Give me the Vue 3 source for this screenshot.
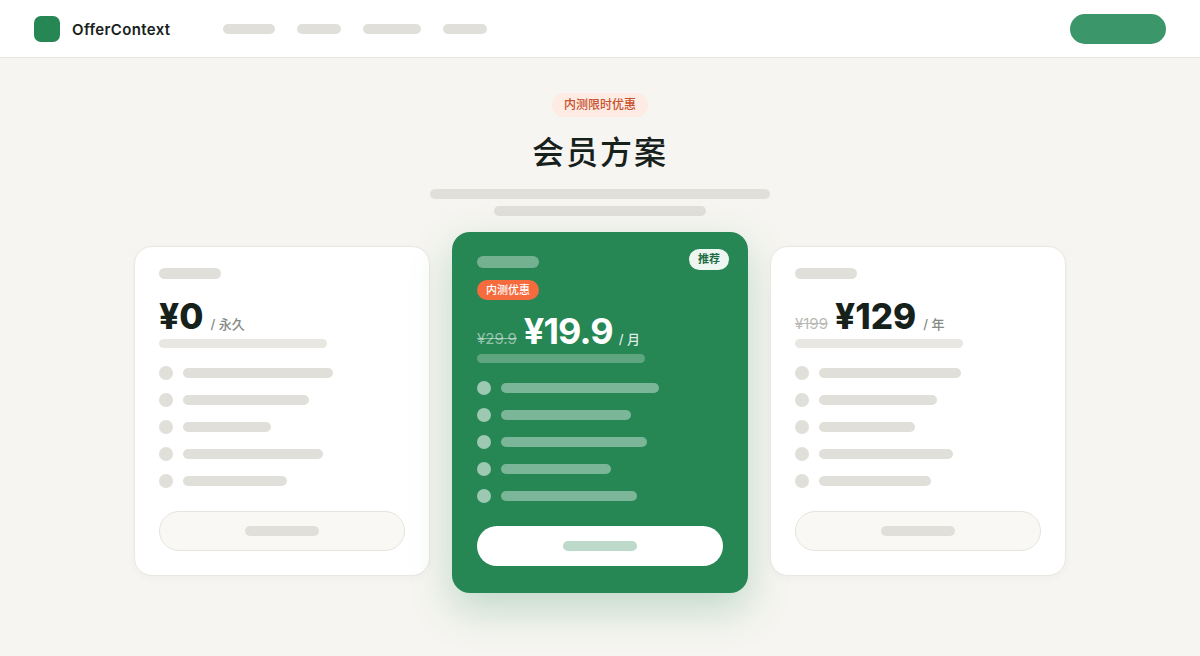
<script setup>
const navs = [52, 44, 58, 44]
const plans = [
  { key: 'free', old: '', price: '¥0', unit: '/ 永久', rows: [150, 126, 88, 140, 104] },
  { key: 'pro', old: '¥29.9', price: '¥19.9', unit: '/ 月', rows: [158, 130, 146, 110, 136] },
  { key: 'year', old: '¥199', price: '¥129', unit: '/ 年', rows: [142, 118, 96, 134, 112] }
]
</script>

<template>
  <div class="page">
    <header class="top">
      <div class="logo"></div>
      <span class="brand">OfferContext</span>
      <nav class="nav">
        <i v-for="(w, n) in navs" :key="n" class="bar nav-bar" :style="{ width: w + 'px' }"></i>
      </nav>
      <div class="cta"></div>
    </header>
    <main class="main">
      <div class="tag">内测限时优惠</div>
      <h1 class="title">会员方案</h1>
      <i class="bar lead lead-a"></i>
      <i class="bar lead lead-b"></i>
      <section class="cards">
        <article v-for="p in plans" :key="p.key" class="card" :class="{ hot: p.key === 'pro' }">
          <span v-if="p.key === 'pro'" class="rec">推荐</span>
          <i class="bar name"></i>
          <span v-if="p.key === 'pro'" class="promo">内测优惠</span>
          <div class="price-row">
            <s v-if="p.old" class="old">{{ p.old }}</s>
            <span class="price">{{ p.price }}</span>
            <span class="unit">{{ p.unit }}</span>
          </div>
          <i class="bar desc"></i>
          <ul class="rows">
            <li v-for="(w, n) in p.rows" :key="n" class="row">
              <i class="dot"></i>
              <i class="bar row-bar" :style="{ width: w + 'px' }"></i>
            </li>
          </ul>
          <div class="btn"><i class="bar btn-bar"></i></div>
        </article>
      </section>
    </main>
  </div>
</template>

<style>
html, body { margin: 0; background: #f6f5f1; }
</style>

<style scoped>
.page {
  height: 656px;
  overflow: hidden;
  background: #f6f5f1;
  font-family: Inter, "Noto Sans CJK SC", sans-serif;
  color: #17211c;
}
i { display: block; }
.bar { border-radius: 6px; background: #e0dfd9; }
.top {
  box-sizing: border-box;
  height: 58px;
  display: flex;
  align-items: center;
  padding: 0 34px;
  background: #fff;
  border-bottom: 1px solid #e6e4de;
}
.logo { width: 26px; height: 26px; border-radius: 7px; background: #268654; }
.brand { width: 99px; margin-left: 12px; padding-top: 1px; font-size: 15px; font-weight: 600; letter-spacing: 0.36px; white-space: nowrap; }
.nav { display: flex; gap: 22px; margin-left: 52px; }
.nav-bar { height: 10px; }
.cta { width: 96px; height: 30px; margin-left: auto; border-radius: 15px; background: #3b9669; }
.main { display: flex; flex-direction: column; align-items: center; padding-top: 35px; }
.tag {
  box-sizing: border-box;
  width: 96px;
  height: 24px;
  border-radius: 12px;
  background: #fdebe4;
  color: #c8502c;
  font-size: 12px;
  font-weight: 500;
  line-height: 24px;
  text-align: center;
}
.title {
  margin: 16px 0 16px;
  font-size: 32px;
  line-height: 40px;
  font-weight: 500;
  letter-spacing: 2px;
}
.lead { height: 10px; }
.lead-a { width: 340px; }
.lead-b { width: 212px; margin-top: 7px; }
.cards { display: flex; align-items: flex-start; gap: 22px; margin-top: 16px; }
.card {
  position: relative;
  box-sizing: border-box;
  width: 296px;
  height: 330px;
  margin-top: 14px;
  padding: 21px 24px 0;
  display: flex;
  flex-direction: column;
  align-items: flex-start;
  background: #fff;
  border: 1px solid #e9e7e1;
  border-radius: 18px;
  box-shadow: 0 2px 8px rgba(23, 33, 28, 0.03);
}
.name { width: 62px; height: 11px; }
.price-row { display: flex; align-items: baseline; height: 40px; margin-top: 17px; white-space: nowrap; }
.old { margin-right: 7px; font-size: 15px; color: #b9bab5; }
.price { font-size: 35px; line-height: 40px; font-weight: 800; }
.unit { margin-left: 7px; font-size: 13px; font-weight: 500; color: #858a86; }
.desc { width: 168px; height: 9px; margin-top: 3px; background: #e8e7e2; }
.rows { list-style: none; margin: 18px 0 0; padding: 0; display: flex; flex-direction: column; gap: 13px; }
.row { display: flex; align-items: center; gap: 10px; height: 14px; }
.dot { width: 14px; height: 14px; border-radius: 50%; background: #e0dfd9; }
.row-bar { height: 10px; }
.btn {
  box-sizing: border-box;
  align-self: stretch;
  height: 40px;
  margin-top: 23px;
  display: flex;
  align-items: center;
  justify-content: center;
  border: 1px solid #e6e4de;
  border-radius: 20px;
  background: #f9f8f4;
}
.btn-bar { width: 74px; height: 10px; }
.hot {
  height: 361px;
  margin-top: 0;
  padding: 24px 25px 0;
  background: #268654;
  border: 0;
  color: #fff;
  box-shadow: 0 16px 40px rgba(38, 134, 84, 0.26);
}
.hot .bar { background: rgba(255, 255, 255, 0.4); }
.hot .name { height: 12px; background: rgba(255, 255, 255, 0.36); }
.hot .desc { margin-top: 3px; background: rgba(255, 255, 255, 0.26); }
.hot .dot { background: rgba(255, 255, 255, 0.55); }
.hot .old { color: rgba(255, 255, 255, 0.5); }
.hot .price { font-size: 36px; font-weight: 700; letter-spacing: -0.9px; }
.hot .unit { margin-left: 6px; color: rgba(255, 255, 255, 0.85); }
.hot .price-row { margin-top: 11px; }
.hot .rows { margin-top: 18px; }
.rec {
  position: absolute;
  top: 17px;
  right: 19px;
  width: 40px;
  height: 21px;
  border-radius: 11px;
  background: #eef6f1;
  color: #1f6b44;
  font-size: 11px;
  font-weight: 600;
  line-height: 21px;
  text-align: center;
}
.promo {
  width: 62px;
  height: 20px;
  margin-top: 12px;
  border-radius: 10px;
  background: #f56b3d;
  color: #fff;
  font-size: 11px;
  font-weight: 500;
  line-height: 20px;
  text-align: center;
}
.hot .btn { height: 40px; margin-top: 23px; border: 0; background: #fff; }
.hot .btn-bar { background: #bdd9ca; }
</style>
